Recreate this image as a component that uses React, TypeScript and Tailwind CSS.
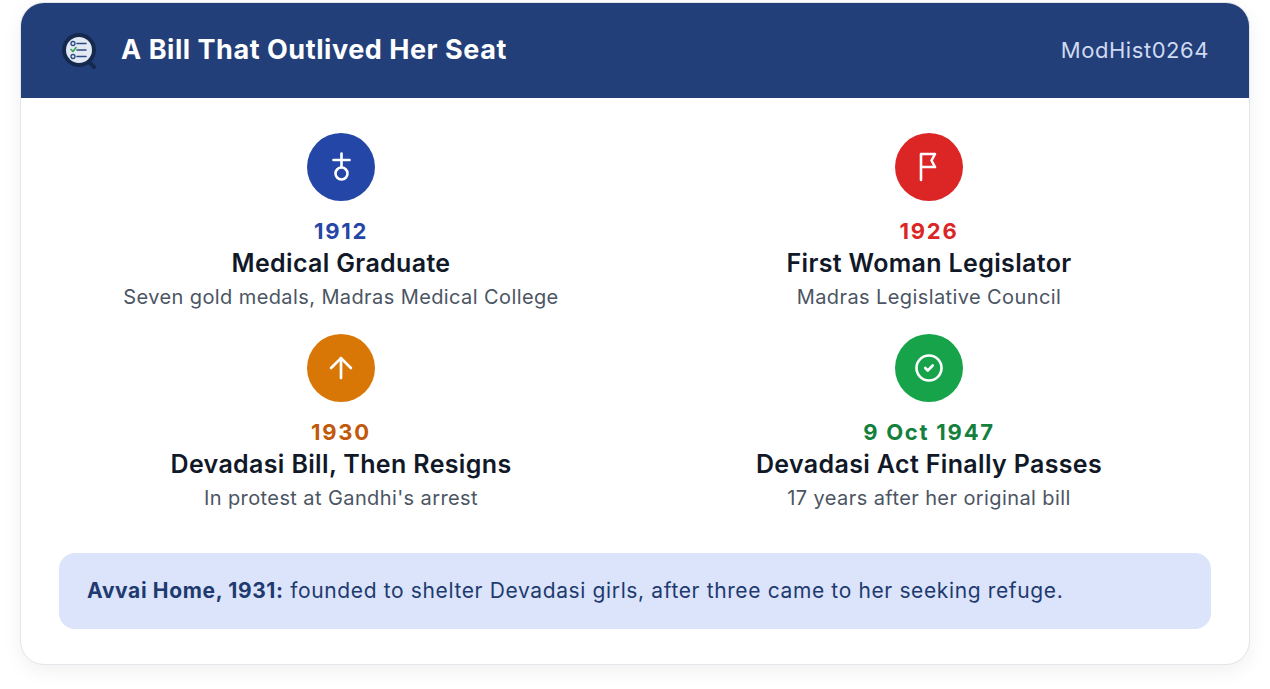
import React from "react";
import { ArrowUp, CircleCheck } from "lucide-react";

function Logo() {
  return (
    <svg width="38" height="38" viewBox="0 0 38 38">
      <path d="M26 28 L33 35" stroke="#15294f" strokeWidth="4" strokeLinecap="round" />
      <circle cx="18" cy="18" r="17" fill="#15294f" />
      <circle cx="18" cy="18" r="13" fill="#e3e9f3" />
      <circle cx="12" cy="11.5" r="2" fill="none" stroke="#2b4a86" strokeWidth="1.3" />
      <path d="M16 11.5 H25" stroke="#2b4a86" strokeWidth="1.6" strokeLinecap="round" />
      <path d="M10 17.5 L12 19.5 L15 15.5" fill="none" stroke="#2fa84f" strokeWidth="1.6" strokeLinecap="round" strokeLinejoin="round" />
      <path d="M16 18 H25" stroke="#2b4a86" strokeWidth="1.6" strokeLinecap="round" />
      <circle cx="12" cy="24.5" r="2" fill="none" stroke="#2b4a86" strokeWidth="1.3" />
      <path d="M16 24.5 H25" stroke="#2b4a86" strokeWidth="1.6" strokeLinecap="round" />
    </svg>
  );
}

function OrbIcon() {
  return (
    <svg width="30" height="30" viewBox="0 0 30 30" fill="none" stroke="white" strokeWidth="2.6" strokeLinecap="round">
      <path d="M15.5 1.5 V15" />
      <path d="M7.5 8 H23.5" />
      <circle cx="15.5" cy="21.5" r="6" />
    </svg>
  );
}

function FlagIcon() {
  return (
    <svg width="30" height="30" viewBox="0 0 30 30" fill="none" stroke="white" strokeWidth="2.6" strokeLinecap="round" strokeLinejoin="round">
      <path d="M7 28 V2 H21 L17.5 8.5 L21 15 H7" />
    </svg>
  );
}

const events = [
  {
    icon: <OrbIcon />,
    circle: "bg-[#2446a6]",
    yearColor: "text-[#2446a6]",
    year: "1912",
    title: "Medical Graduate",
    sub: "Seven gold medals, Madras Medical College",
  },
  {
    icon: <FlagIcon />,
    circle: "bg-[#dc2626]",
    yearColor: "text-[#dc2626]",
    year: "1926",
    title: "First Woman Legislator",
    sub: "Madras Legislative Council",
  },
  {
    icon: <ArrowUp size={34} strokeWidth={1.9} color="white" />,
    circle: "bg-[#d97706]",
    yearColor: "text-[#c2580a]",
    year: "1930",
    title: "Devadasi Bill, Then Resigns",
    sub: "In protest at Gandhi's arrest",
  },
  {
    icon: <CircleCheck size={30} strokeWidth={2.1} color="white" />,
    circle: "bg-[#16a34a]",
    yearColor: "text-[#15803d]",
    year: "9 Oct 1947",
    title: "Devadasi Act Finally Passes",
    sub: "17 years after her original bill",
  },
];

export default function App() {
  return (
    <div className="min-h-screen bg-white px-5 pt-[2px] pb-6 font-['Inter',sans-serif]">
      <div className="overflow-hidden rounded-3xl border border-[#e2e5ea] bg-white shadow-[0_6px_20px_rgba(0,0,0,0.06)]">
        <header className="flex h-[95px] items-center justify-between bg-[#233f7a] px-10">
          <div className="flex items-center gap-[22px]">
            <Logo />
            <h1 className="text-[27px] font-bold tracking-[0.02em] text-white">A Bill That Outlived Her Seat</h1>
          </div>
          <span className="text-[22px] tracking-[0.025em] text-[#cfdaf0]">ModHist0264</span>
        </header>

        <main className="px-[38px] pt-[35px] pb-[35px]">
          <div className="grid grid-cols-2 gap-x-6 gap-y-[23px]">
            {events.map((e) => (
              <div key={e.year} className="flex flex-col items-center text-center">
                <div className={`flex h-[68px] w-[68px] items-center justify-center rounded-full ${e.circle}`}>
                  {e.icon}
                </div>
                <div className={`mt-[14px] text-[22px] leading-8 font-bold tracking-[0.08em] ${e.yearColor}`}>{e.year}</div>
                <div className="text-[25px] leading-8 font-semibold tracking-[0.014em] text-[#111827]">{e.title}</div>
                <div className="mt-1 text-[20px] leading-7 tracking-[0.02em] text-[#4b5563]">{e.sub}</div>
              </div>
            ))}
          </div>

          <div className="mt-[41px] rounded-2xl bg-[#dbe4fb] px-7 py-[22px] text-[21px] leading-8 tracking-[0.03em] text-[#1e3a6e]">
            <span className="font-bold">Avvai Home, 1931:</span> founded to shelter Devadasi girls, after three came
            to her seeking refuge.
          </div>
        </main>
      </div>
    </div>
  );
}
